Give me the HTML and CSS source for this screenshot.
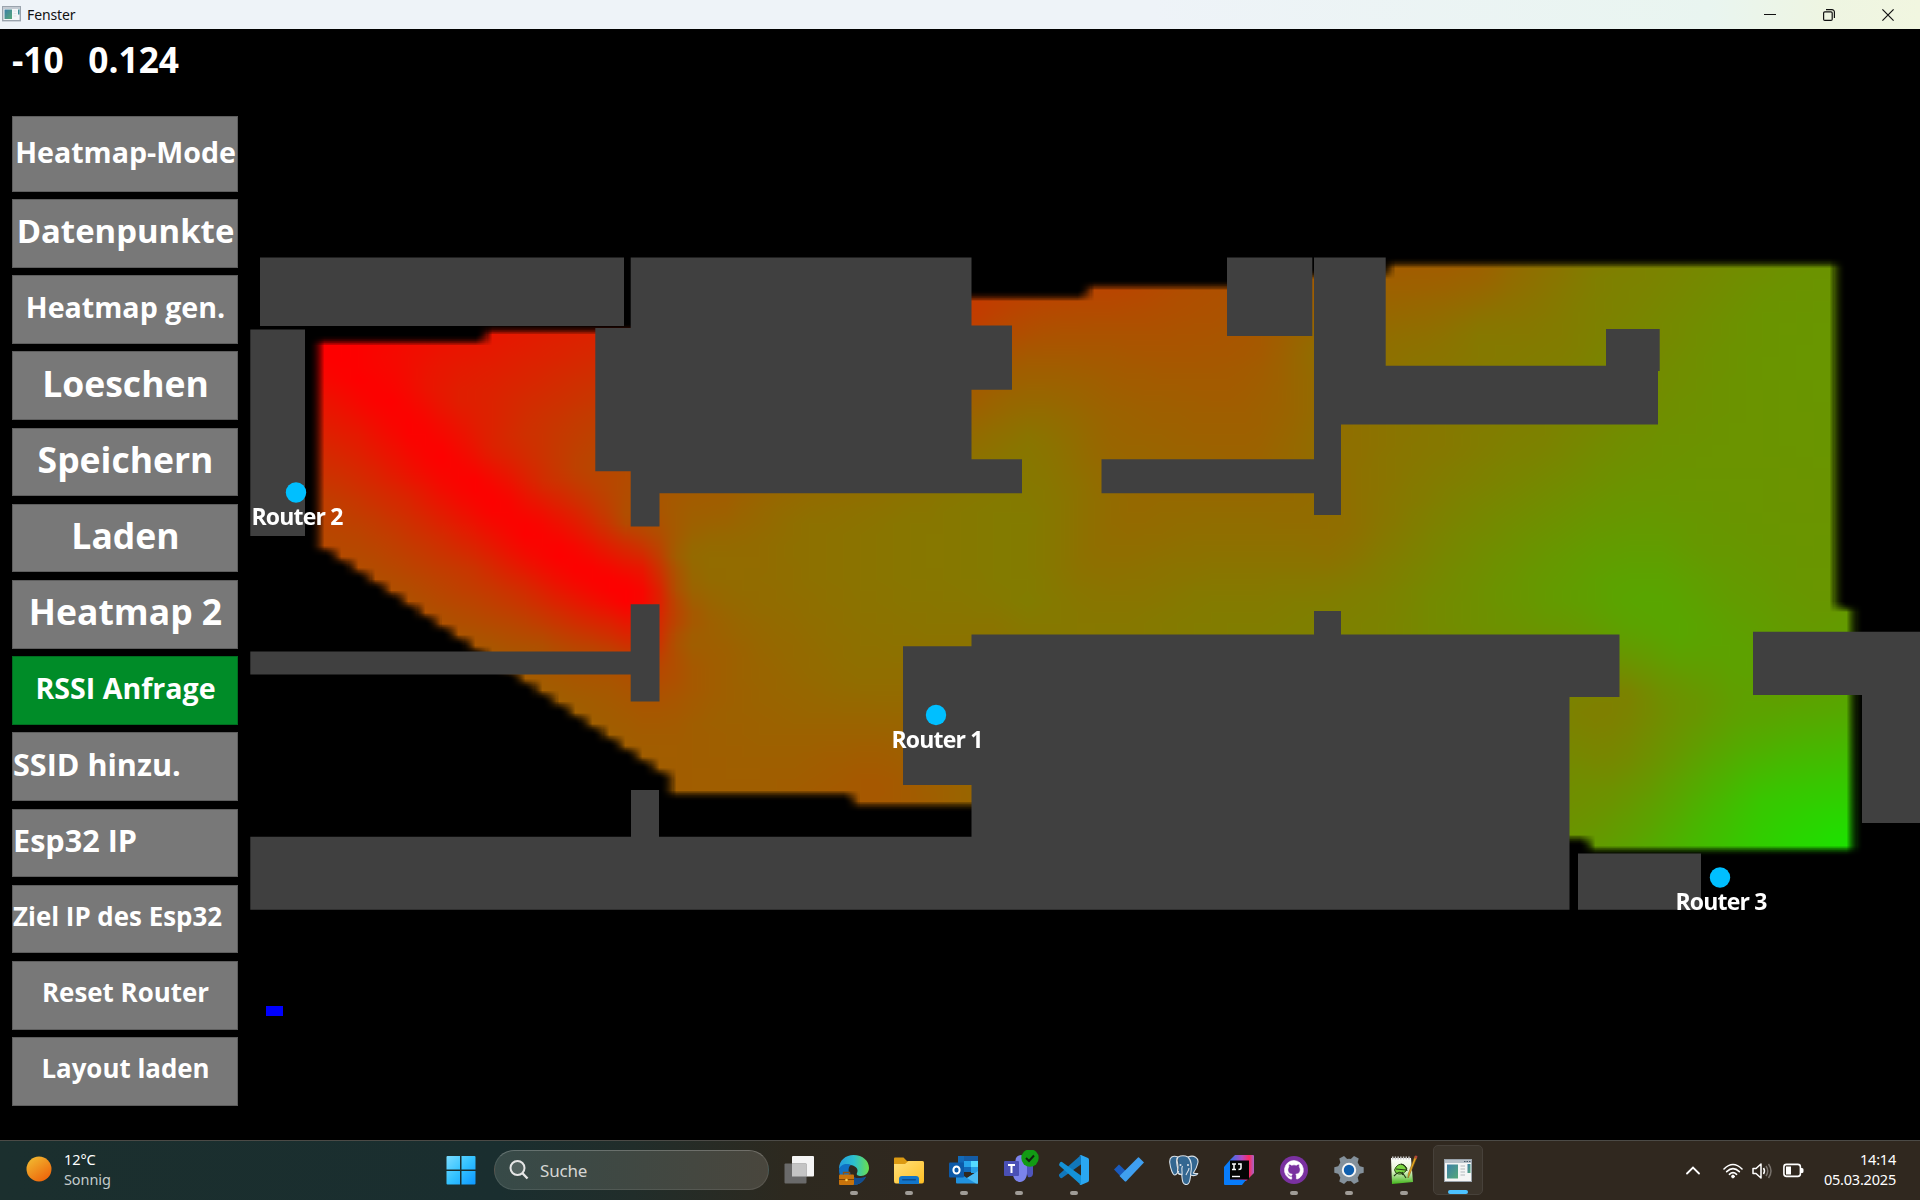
FILE: index.html
```html
<!DOCTYPE html>
<html lang="de">
<head>
<meta charset="utf-8">
<title>Fenster</title>
<link rel="stylesheet" href="styles.css">
</head>
<body>
<svg class="defs" width="0" height="0"><defs>
  <linearGradient id="scr" x1="0" y1="0" x2="1" y2="1"><stop offset="0" stop-color="#3c7fa8"/><stop offset="1" stop-color="#56a878"/></linearGradient>
  <linearGradient id="sun" x1=".1" y1="0" x2=".8" y2="1"><stop offset="0" stop-color="#f1bd32"/><stop offset="1" stop-color="#ee6109"/></linearGradient>
  <linearGradient id="win" x1="0" y1="0" x2="1" y2="1"><stop offset="0" stop-color="#7adcff"/><stop offset=".5" stop-color="#33c2ff"/><stop offset="1" stop-color="#0d97ff"/></linearGradient>
  <linearGradient id="edge"><stop offset="0" stop-color="#239dde"/><stop offset=".5" stop-color="#2cc0cf"/><stop offset="1" stop-color="#6be04c"/></linearGradient>
  <linearGradient id="folder" x1="0" y1="0" x2="1" y2="1"><stop offset="0" stop-color="#ffe07a"/><stop offset="1" stop-color="#ffbf24"/></linearGradient>
  <linearGradient id="ij" x1="0" y1="0" x2="1" y2="0"><stop offset="0" stop-color="#2d74ee"/><stop offset=".5" stop-color="#b34ac5"/><stop offset=".8" stop-color="#fe2a5f"/><stop offset="1" stop-color="#a763c9"/></linearGradient>
  <linearGradient id="npp" x1="0" y1="0" x2="0" y2="1"><stop offset="0" stop-color="#fff"/><stop offset=".5" stop-color="#e3f5d0"/><stop offset="1" stop-color="#42b61a"/></linearGradient>
</defs></svg>
<div class="desktop">
  <header class="titlebar">
    <svg class="app-icon" width="19" height="16" viewBox="0 0 19 16"><rect x=".7" y=".7" width="17.6" height="14" fill="#f4f6f8" stroke="#9aa3ad" stroke-width="1.4"/><rect x="1" y="1" width="17" height="2" fill="#c3cad2"/><rect x="2.5" y="3.5" width="7.5" height="9.5" fill="url(#scr)"/><rect x="16" y="3.5" width="1.500" height="5" fill="#3f8f9a"/><path d="M11.5 5h3M11.5 7.5h3M11.5 10h3" stroke="#dfe3e6"/></svg>
    <span class="title">Fenster</span>
    <div class="controls">
      <svg width="12" height="12" viewBox="0 0 12 12"><path d="M0 5.500h12" stroke="#111" fill="none"/></svg>
      <svg width="12" height="12" viewBox="0 0 12 12" fill="none" stroke="#111" stroke-width="1.2"><rect x=".6" y="2.8" width="8.6" height="8.6" rx="1.2"/><path d="M3 .7h6a2.4 2.4 0 0 1 2.4 2.4V9"/></svg>
      <svg width="12" height="12" viewBox="0 0 12 12"><path d="M.4.4l11.2 11.2M11.6.4L.4 11.6" stroke="#111" stroke-width="1.2"/></svg>
    </div>
  </header>

  <main class="stage">
    <aside class="sidebar">
      <div class="status"><span>-10</span><span>0.124</span></div>
      <nav class="buttons">
        <button class="btn tall s29">Heatmap-Mode</button>
        <button class="btn s33">Datenpunkte</button>
        <button class="btn s29">Heatmap gen.</button>
        <button class="btn s36">Loeschen</button>
        <button class="btn s36">Speichern</button>
        <button class="btn s36">Laden</button>
        <button class="btn s36">Heatmap 2</button>
        <button class="btn s29 active">RSSI Anfrage</button>
        <button class="btn s31 left">SSID hinzu.</button>
        <button class="btn s31 left">Esp32 IP</button>
        <button class="btn s26 left">Ziel IP des Esp32</button>
        <button class="btn s26">Reset Router</button>
        <button class="btn s26">Layout laden</button>
      </nav>
    </aside>
    <section class="plan">
      <canvas id="heat" width="1682" height="1111"></canvas>
      <svg class="walls" width="1682" height="1111" viewBox="238 29 1682 1111">
        <g fill="#404040">
          <path d="M260 257.500H624V326H260z"/>
          <path d="M250.300 329.500H305V536H250.300z"/>
          <path d="M630.700 257.500H971.500V325.500H1012V389.700H971.500V459.300H1022V493.300H659.500V526.500H630.700V471.300H595.300V328H630.700z"/>
          <path d="M250.300 651.500H630.700V604.300H659.500V701.500H630.700V674.500H250.300z"/>
          <path d="M250.300 836.700H631V790H659V836.700H971.500V785H903V646.300H971.500V634.500H1314V611H1341V634.500H1619.500V697H1569.500V909.700H250.300z"/>
          <path d="M1227 257.500H1312.300V336H1227z"/>
          <path d="M1314 257.500H1385.700V365.700H1606V329H1659.700V371H1658V424.500H1341V515H1314V493.300H1101.500V459.300H1314z"/>
          <path d="M1753 631.700H1920V823H1862V695H1753z"/>
          <path d="M1578 853.500H1701V909.700H1578z"/>
        </g>
        <rect x="266" y="1006" width="17" height="10" fill="#00f"/>
        <g fill="#00bfff"><circle cx="296" cy="492.500" r="10.200"/><circle cx="936" cy="715" r="10.200"/><circle cx="1720" cy="877.500" r="10.200"/></g>
        <g class="labels">
          <text x="251.500" y="525" textLength="92">Router 2</text>
          <text x="891.500" y="747.500" textLength="92">Router 1</text>
          <text x="1675.500" y="910" textLength="92">Router 3</text>
        </g>
      </svg>
    </section>
  </main>

  <footer class="taskbar">
    <div class="weather">
      <svg width="26" height="26" viewBox="0 0 26 26"><circle cx="13" cy="13" r="12.500" fill="url(#sun)"/></svg>
      <div class="weather-text"><span>12°C</span><span class="dim">Sonnig</span></div>
    </div>
    <div class="tasks">
      <span class="task start"><svg width="30" height="30" viewBox="0 0 30 30" fill="url(#win)"><path d="M.5 2q0-1 1-1H14v13.500H.500zM15.500 1H28.500q1 0 1 1V14.500H15.500zM.500 16H14V29.500H1.500q-1 0-1-1zM15.500 16H29.500V28.500q0 1-1 1H15.500z"/></svg></span>
      <div class="search">
        <svg width="20" height="20" viewBox="0 0 20 20" fill="#ffffff22" stroke="#e6e6e6" stroke-width="2"><circle cx="8.500" cy="8" r="7"/><path d="M13.500 13.200l5 5.300" stroke-width="2.400"/></svg>
        <span>Suche</span>
      </div>
      <span class="task"><svg width="30" height="30" viewBox="0 0 30 30"><rect x="8" y="1" width="22" height="20.500" rx="1" fill="#f4f4f4"/><rect x=".5" y="8.500" width="22" height="20" rx="1" fill="#6a6a6a"/><path d="M8 8.500h14.500v13H8z" fill="#c4c4c4"/></svg></span>
      <span class="task open"><svg width="30" height="30" viewBox="0 0 30 30"><path d="M0 14C0 5 7 0 14.500 0 24 0 30 6 30 13c0 5-4 8-8 8-3 0-5-1-4-3 1.500-3 0-6-4-7.500C9 9 3 10 0 14z" fill="url(#edge)"/><path d="M0 15C1 9 8 8 12 10c-3 2-3 6-1 10 3 5 9 6 16 2-3 5-7 8-13 8C6 30 0 23 0 15z" fill="#1070c4"/><path d="M11 17c1 5 6 8 16 4.500-3 5.500-7 8.500-13 8.500-5-3-6-8-3-13z" fill="#134e91"/><rect x="0" y="19.500" width="15" height="10.500" rx="1" fill="#c8730c"/><path d="M4.500 19.500v-2h6v2" fill="none" stroke="#8d5210" stroke-width="1.300"/><path d="M0 24.500h15" stroke="#7d4204"/><circle cx="7.500" cy="25" r="1.300" fill="#ffcd4f"/></svg></span>
      <span class="task open"><svg width="30" height="30" viewBox="0 0 30 30"><path d="M0 3.500q0-1 1-1h8.500L13 6H28q2 0 2 2v8H0z" fill="#dc9a12"/><path d="M0 9h11l3.500-3H28q2 0 2 2v18q0 2.500-2 2.500H2Q0 28.500 0 26z" fill="url(#folder)"/><path d="M5 29v-5q0-3 3-3h14q3 0 3 3v5z" fill="#1275c9"/><rect x="8" y="24" width="14" height="1.500" rx=".7" fill="#0c4d8e"/></svg></span>
      <span class="task open"><svg width="30" height="30" viewBox="0 0 30 30"><path d="M9 1h19.500q.5 0 .5.500V17H9z" fill="#1169b8"/><path d="M15 1h14v5H15z" fill="#145ca5"/><path d="M22 6h7v6h-7z" fill="#54daff"/><path d="M15 6h7v6h-7z" fill="#26a3ea"/><path d="M22 12h7v6h-7z" fill="#279fe5"/><path d="M7 16l11 7 11-7v12.500H8q-1 0-1-1z" fill="#2192df"/><path d="M29 16v12.500h-2L18 23z" fill="#4cbcf4"/><rect x="0" y="7.500" width="15" height="15" rx="1" fill="#0c59a8"/><ellipse cx="7.500" cy="15" rx="3.100" ry="3.600" fill="none" stroke="#fff" stroke-width="2"/></svg></span>
      <span class="task open teams"><svg width="35" height="35" viewBox="0 0 35 35"><circle cx="17" cy="10.500" r="5.500" fill="#7b83eb"/><path d="M20 15h9v9q-1 4-5 3z" fill="#4f55bd"/><path d="M8 15h15v8c0 5-3 9-7 9s-7-4-7-8z" fill="#7b83eb"/><rect x="0" y="11" width="15" height="15" rx="1" fill="#4a50b5"/><path d="M4 15h7M7.500 15v8" stroke="#fff" stroke-width="2" fill="none"/><circle cx="26" cy="8" r="8.700" fill="#129b14"/><path d="M22 8l3 3 5-5.500" fill="none" stroke="#10240f" stroke-width="2"/></svg></span>
      <span class="task open"><svg width="30" height="30" viewBox="0 0 30 30"><path d="M22 0l2 8L3 23q-1 .500-2-.5L0 21q-.5-1 .5-2z" fill="#1177bb"/><path d="M22 30l2-8L3 7Q2 6.500 1 7.500L.3 9q-.5 1 .5 2z" fill="#1492d8"/><path d="M22 0l7 3q1 .500 1 2v20q0 1.500-1 2l-7 3q-1 0-2-1 2 1 2-1V2q0-2-2-1z" fill="#2aa7f2"/></svg></span>
      <span class="task"><svg width="30" height="30" viewBox="0 0 30 30"><path d="M0 14.500l5-5 11.500 11-5 6z" fill="#195abd"/><path d="M5.500 21L24 2.500q.5-.500 1 0L30 7.500 12.500 26q-1 1-2 0z" fill="#3f9ff0"/></svg></span>
      <span class="task"><svg width="30" height="30" viewBox="0 0 30 30" fill="#336791" stroke="#d9e1e8" stroke-width="1.100" stroke-linejoin="round"><path d="M9 2C4 0 0 2 .8 8c.7 6 3 12 5 12 2 0 3-3 4-4M19 2c6-2.500 11 1 9.800 6-.8 4-3 8-4.500 10 1 1 3 .5 4.500.5-1 2.500-5 2.500-7 1.500-1 4-.5 9-4 9.500-4 .5-4.500-3-5-9.500-3-1-5-2-4-6C8 9 6 4 9 2c3-1.500 7-1.500 10 0z"/><path d="M9 2c-3 4 2 8-.5 14 0 3 2 4 4.300 3M19 2c4 4 4 11 2.500 18M13 20c.5-5-1-6 .5-9M17 20c1-3 3-4 3-7" fill="none"/><circle cx="11.500" cy="10" r=".5"/><circle cx="19" cy="10" r=".5"/></svg></span>
      <span class="task"><svg width="30" height="30" viewBox="0 0 30 30"><path d="M11 0h18q1 0 1 1v17l-8 8-16-1V5z" fill="url(#ij)"/><path d="M0 12l6-7v20h16l-4 5H1q-1 0-1-1z" fill="#087cfa"/><rect x="6" y="5.500" width="19" height="19" fill="#050505"/><path d="M8 9h4M10 9v5.500M8 14.500h4M14 9h3v4q0 1.500-2.500 1.500" fill="none" stroke="#fff" stroke-width="1.500"/><path d="M8 21.500h8" stroke="#fff" stroke-width="1.400"/></svg></span>
      <span class="task open"><svg width="28" height="28" viewBox="0 0 28 28"><circle cx="14" cy="14" r="14" fill="#7a31a0"/><path d="M14 4.500A9.600 9.600 0 0 0 11 23.200c.5.100.7-.2.700-.5v-1.900c-2.700.6-3.300-1.200-3.300-1.200-.4-1-1.100-1.400-1.100-1.400-.9-.6.100-.6.100-.6 1 .1 1.500 1 1.500 1 .9 1.500 2.300 1.100 2.800.8.100-.6.300-1 .6-1.300-2.100-.2-4.400-1-4.400-4.700 0-1.100.4-1.900 1-2.600-.1-.3-.4-1.300.1-2.600 0 0 .8-.3 2.600 1a9 9 0 0 1 4.800 0c1.900-1.300 2.700-1 2.700-1 .5 1.300.2 2.300.1 2.600.6.700 1 1.500 1 2.600 0 3.700-2.300 4.500-4.400 4.700.3.300.6.900.6 1.800v2.700c0 .3.200.600.7.500A9.600 9.600 0 0 0 14 4.500z" fill="#fff" stroke="#fff" stroke-width=".6"/></svg></span>
      <span class="task open"><svg width="30" height="30" viewBox="-15 -15 30 30"><g fill="#84919b"><circle r="11.300"/><path d="M-4-10l1.300-4.700h5.400L4-10v20l-1.300 4.700h-5.400L-4 10z" transform="rotate(30)"/><path d="M-4-10l1.300-4.700h5.400L4-10v20l-1.300 4.700h-5.400L-4 10z" transform="rotate(90)"/><path d="M-4-10l1.300-4.700h5.400L4-10v20l-1.300 4.700h-5.400L-4 10z" transform="rotate(150)"/></g><circle r="6.200" fill="#0f5fae" stroke="#f4f4f4" stroke-width="2"/></svg></span>
      <span class="task open"><svg width="30" height="30" viewBox="0 0 30 30"><path d="M2 3h20l2 24-21 2z" fill="url(#npp)"/><path d="M3 3h19" stroke="#c8c8c8" stroke-width="3" stroke-dasharray="1.500 1.200"/><path d="M7 12q4-5 9-1 3 2 1 5-5 5-10 2-3-3 0-6z" fill="#79d640" stroke="#32521c"/><path d="M5 21q6-7 9-1M12 9q5 1 6 7M7 14l10 1M13 17l4 6" fill="none" stroke="#263d18" stroke-width="1.200"/><path d="M28 2l-7.500 18-1.500 3 .2-4L26 1z" fill="#e9a91e" stroke="#84601c" stroke-width=".6"/><path d="M28.500 1l-1 3-2-1 1-2.500z" fill="#b5443c"/></svg></span>
      <span class="task open current"><svg width="28" height="23" viewBox="0 0 28 23"><rect x=".5" y=".5" width="27" height="22" fill="#f5f5f5" stroke="#9aa3ab"/><path d="M1 1h26v3H1z" fill="#b9c1c9"/><path d="M20 2.500h1.500M22.500 2.500H24M25 2.500h1.500" stroke="#456"/><rect x="3" y="5.500" width="11" height="14" fill="url(#scr)"/><path d="M16.500 7h4.500M16.500 10h4.500M16.500 13h4.500M16.500 16h4.500" stroke="#c9cdd0" stroke-width="1.500"/><rect x="23.500" y="5" width="3" height="9" fill="url(#scr)"/></svg></span>
    </div>
    <div class="tray">
      <svg class="chev" width="14" height="9" viewBox="0 0 14 9"><path d="M1 7.500l6-6 6 6" fill="none" stroke="#fff" stroke-width="1.800" stroke-linecap="round"/></svg>
      <svg class="wifi" width="20" height="16" viewBox="0 0 20 16" fill="none" stroke="#fff" stroke-width="1.600" stroke-linecap="round"><path d="M1 6q9-9 18 0M3.700 8.700q6.300-6 12.600 0M6.400 11.300q3.600-3.300 7.200 0"/><circle cx="10" cy="13.500" r="1.400" fill="#fff" stroke-width="1"/></svg>
      <svg class="vol" width="20" height="18" viewBox="0 0 20 18" fill="none" stroke="#fff" stroke-width="1.500" stroke-linejoin="round"><path d="M1 6.500h3L9 2v14l-5-4.500H1z"/><path d="M11.500 6q2 3 0 6"/><path d="M14 4q3.500 5 0 10M16.500 2q5 7 0 14" stroke="#77716b"/></svg>
      <svg class="bat" width="21" height="15" viewBox="0 0 21 15"><rect x=".9" y="1.400" width="16.500" height="12" rx="2.600" fill="none" stroke="#fff" stroke-width="1.600"/><path d="M3 3.500h5v8H3zM18 5h1q1.500 0 1.500 1.500v2Q20.500 10 19 10h-1z" fill="#fff"/></svg>
      <div class="clock"><span>14:14</span><span>05.03.2025</span></div>
    </div>
  </footer>
</div>
<script src="heatmap.js"></script>
</body>
</html>
```
FILE: styles.css
```css
* { box-sizing: border-box; }
body { margin: 0; background: #000; font-family: "Noto Sans", "Open Sans", sans-serif; overflow: hidden; }
.desktop { width: 1920px; height: 1200px; display: flex; flex-direction: column; }

.titlebar { height: 29px; display: flex; align-items: center; padding: 0 26px 0 2px; background: linear-gradient(90deg, #eef3f8 0, #eef3f8 60%, #e9f5f0 89%, #eef5e2 95%, #f1f6e0 100%); flex: none; }
.app-icon { margin-top: -2px; }
.title { margin-left: 6px; font: 14px "Noto Sans", sans-serif; letter-spacing: -.1px; color: #111; }
.controls { margin-left: auto; display: flex; gap: 47px; align-items: center; }
.controls svg { display: block; }

.stage { height: 1111px; display: flex; flex: none; }
.sidebar { width: 238px; padding-left: 12px; flex: none; }
.status { height: 87px; padding-top: 5px; display: flex; gap: 24.500px; color: #fff; font-family: "Open Sans", sans-serif; font-weight: 700; font-size: 35.300px; line-height: 50px; white-space: pre; }
.buttons { display: flex; flex-direction: column; gap: 7.500px; }
.btn { width: 226px; height: 68.700px; flex: none; border: 1px solid #5e5e5e; padding: 0 0 6px 1px; background: #787878; color: #fff; font-family: "Open Sans", "Noto Sans", sans-serif; font-weight: 700; text-align: center; white-space: nowrap; }
.tall { height: 75.500px; padding-bottom: 5px; }
.active { background: #008c28; border-color: #006e20; }
.left { text-align: left; padding-left: 0; }
.s26 { font-size: 25.900px; }
.s29 { font-size: 28.600px; }
.s31 { font-size: 30.600px; }
.s33 { font-size: 32.900px; }
.s36 { font-size: 35.500px; }

.plan { width: 1682px; height: 1111px; display: grid; }
.plan canvas, .walls { grid-area: 1 / 1; display: block; }
.labels { fill: #fff; font-family: "Open Sans", sans-serif; font-weight: 700; font-size: 23px; }

.taskbar { height: 60px; flex: none; display: flex; align-items: center; border-top: 1px solid #4b4a46; background: linear-gradient(90deg, #1b2f2e 0, #1a2e2f 26%, #212d2a 33%, #2d291f 41%, #30281f 48%, #30281f 100%); color: #fff; }
.weather { width: 441px; padding-left: 26px; display: flex; align-items: center; gap: 12px; font-size: 14.500px; line-height: 20px; letter-spacing: -.1px; }
.weather svg { margin-top: -3px; }
.weather-text { display: flex; flex-direction: column; margin-top: -3px; }
.dim { color: #c3cbcb; }
.tasks { display: flex; align-items: center; height: 100%; padding-bottom: 1px; }
.task { width: 55px; height: 50px; display: flex; align-items: center; justify-content: center; position: relative; }
.task svg { display: block; }
.task.start { width: 40px; margin-right: 13px; }
.teams { padding: 0 0 6px 5px; }
.open::after { content: ""; position: absolute; left: 23.500px; bottom: 0; width: 8px; height: 4px; border-radius: 2px; background: #a09c97; }
.current { width: 50px; margin-left: 2px; border: 1px solid #47413a; border-radius: 5px; background: #3b342b; }
.current::after { left: 14px; bottom: 0; width: 20px; background: #4cc2ff; }
.search { width: 275px; height: 40px; padding-left: 14px; border-radius: 20px; display: flex; align-items: center; gap: 11px; background: linear-gradient(90deg, #374a48, #49463d); border: 1px solid #ffffff18; border-top-color: #ffffff38; color: #d6d6d4; font-size: 17px; letter-spacing: -.2px; margin-right: 2px; }
.tray { margin-left: auto; padding-right: 24px; display: flex; align-items: center; }
.wifi { margin-left: 23px; }
.vol { margin-left: 9px; }
.bat { margin-left: 11px; }
.clock { width: 92px; margin-top: -3px; display: flex; flex-direction: column; text-align: right; font-size: 14.500px; line-height: 20px; letter-spacing: -.2px; }
.defs { position: absolute; }
```
FILE: heatmap.js
```js
// Signal samples: x, y, level (0 = red, 255 = green)
const samples = [
  322,345,0, 330,357,0, 358,380,0, 387,403,0, 413,430,0, 440,457,0, 473,480,0, 500,504,0, 530,530,0, 560,553,0,
  585,569,0, 607,585,0, 630,603,0,
  400,345,10, 480,335,20, 560,330,30, 594,335,35, 594,400,55, 594,470,70, 625,480,75, 625,520,78,
  490,450,33, 523,433,48, 453,400,30, 423,383,20, 373,362,6, 540,483,42, 573,473,64, 607,503,65, 573,520,28,
  607,535,42, 623,560,25, 390,450,18, 357,433,25, 340,400,14, 440,533,42, 407,500,38, 473,567,52, 473,533,26,
  523,583,40, 523,560,17, 573,600,25, 573,627,52, 607,620,33, 500,420,38, 540,380,40,
  325,400,18, 325,450,40, 325,500,62, 325,540,72, 400,595,80, 480,650,88, 450,590,67, 370,540,68,
  355,500,55, 540,642,78, 600,650,68, 628,640,42,
  590,685,88, 622,668,80, 560,690,92, 620,730,93, 645,530,72, 645,565,28, 652,595,12, 665,590,50,
  662,640,50, 665,680,76, 680,640,93, 680,590,92, 680,555,103, 665,500,88, 664,540,78,
  680,780,93, 800,800,92, 870,780,88, 900,790,90, 950,800,98, 720,510,95, 700,620,92, 720,650,95,
  760,560,108, 800,520,112, 800,640,107, 860,560,116, 900,520,118, 960,540,121, 980,600,120,
  920,640,115, 850,680,110, 780,720,100, 700,720,95, 870,750,94, 890,700,106, 960,498,120,
  1030,520,124, 1025,600,125, 1060,520,118, 1085,560,112, 1120,520,106, 1200,510,108, 1300,510,108,
  1340,530,110, 1200,600,123, 1100,620,120, 1300,600,125, 1330,560,115, 1200,560,115, 1000,625,117,
  975,300,60, 975,320,62, 1030,300,68, 1080,300,72, 1120,290,70, 1200,292,80, 1220,310,82,
  975,400,95, 975,450,112, 1030,350,88, 1100,340,85, 1200,360,88, 1260,350,90, 1280,400,98,
  1310,350,108, 1310,440,108, 1250,450,98, 1150,440,100, 1180,400,94, 1080,440,108, 1030,440,118,
  1000,370,92, 1090,500,112, 1100,450,103,
  1395,280,95, 1440,275,95, 1480,275,99, 1540,280,115, 1600,280,128, 1700,270,137, 1750,270,142,
  1830,270,148, 1400,340,112, 1480,330,120, 1560,350,125, 1650,300,133, 1700,350,143, 1750,350,148,
  1830,400,150, 1760,300,147, 1350,430,112, 1400,450,118, 1350,500,112, 1350,600,128, 1400,520,122,
  1450,450,122, 1450,520,132, 1500,450,128, 1550,450,132, 1600,450,140, 1660,440,145, 1640,520,153,
  1740,430,148, 1820,500,148, 1700,550,153, 1650,560,160, 1620,600,165, 1660,600,166, 1550,600,155,
  1500,600,148, 1430,600,138, 1370,630,130, 1560,540,150, 1720,600,158, 1780,600,153, 1820,600,150,
  1840,620,154, 1620,640,158, 1680,640,166, 1740,660,163, 1630,665,147, 1625,692,130, 1680,660,160,
  1700,690,152, 1740,690,160, 1575,700,130, 1600,705,128, 1600,730,130, 1660,700,142, 1600,760,136,
  1575,770,140, 1575,830,148, 1630,760,140, 1700,710,151, 1780,700,160, 1840,710,168, 1690,760,160,
  1750,750,174, 1840,760,190, 1640,820,160, 1700,820,182, 1760,800,198, 1800,830,213, 1845,845,226,
  1600,840,155, 1845,800,208, 1640,725,137
];
const pts = [];
for (let i = 0; i < samples.length; i += 3) pts.push(samples.slice(i, i + 3));

// Weights of a linear radial basis, solved by elimination
const n = pts.length;
const m = pts.map(p => [...pts.map(q => Math.hypot(p[0] - q[0], p[1] - q[1])), 1, p[2]]);
m.push([...pts.map(() => 1), 0, 0]);
for (let c = 0; c <= n; c++) {
  let best = c;
  for (let r = c + 1; r <= n; r++) if (Math.abs(m[r][c]) > Math.abs(m[best][c])) best = r;
  [m[c], m[best]] = [m[best], m[c]];
  for (let r = 0; r <= n; r++) {
    if (r === c) continue;
    const f = m[r][c] / m[c][c];
    if (f) for (let k = c; k <= n + 1; k++) m[r][k] -= f * m[c][k];
  }
}
const w = m.map((row, i) => row[n + 1] / row[i]);
const level = (x, y) => {
  let s = w[n];
  for (let i = 0; i < n; i++) s += w[i] * Math.hypot(x - pts[i][0], y - pts[i][1]);
  return Math.max(0, Math.min(255, s));
};

// Covered area, with its stepped lower left edge
const area = new Path2D();
area.moveTo(320, 342.5);
[[487,342.5],[487,331.3],[620,331.3],[620,325],[700,325],[700,296.5],[1088,296.5],[1088,286],[1300,286],[1300,275],
 [1390,275],[1390,264],[1834,264],[1834,608],[1851,608],[1851,849],[1588,849],[1588,838],[1500,838],
 [1500,805],[855,805],[855,794],[671,794]].forEach(p => area.lineTo(p[0], p[1]));
for (let i = 20; i >= 0; i--) {
  area.lineTo(337 + i * 16.72, 550 + i * 11.11);
  area.lineTo(320.3 + i * 16.72, 550 + i * 11.11);
}
area.closePath();

// One sample per grid node, scaled up smoothly
const canvas = document.getElementById('heat');
const ctx = canvas.getContext('2d', { willReadFrequently: true });
const cw = 16.72, ch = 11.11, cols = 101, rows = 62;
const ox = 324.5 - 5.5 * cw, oy = 345.5 - 9.5 * ch;
const grid = document.createElement('canvas');
grid.width = cols;
grid.height = rows;
const g = grid.getContext('2d');
const img = g.createImageData(cols, rows);
for (let j = 0; j < rows; j++) for (let i = 0; i < cols; i++) {
  const x = ox + (i + .5) * cw, y = oy + (j + .5) * ch;
  if (!ctx.isPointInPath(area, x, y)) continue;
  const v = level(x, y);
  img.data.set([255 - v, v, 0, 255], (j * cols + i) * 4);
}
g.putImageData(img, 0, 0);
ctx.imageSmoothingEnabled = true;
ctx.drawImage(grid, ox - 238, oy - 29, cols * cw, rows * ch);

// Quadratic falloff at the border
const out = ctx.getImageData(0, 0, canvas.width, canvas.height);
for (let i = 3; i < out.data.length; i += 4) out.data[i] = out.data[i] * out.data[i] / 255;
ctx.putImageData(out, 0, 0);
```
